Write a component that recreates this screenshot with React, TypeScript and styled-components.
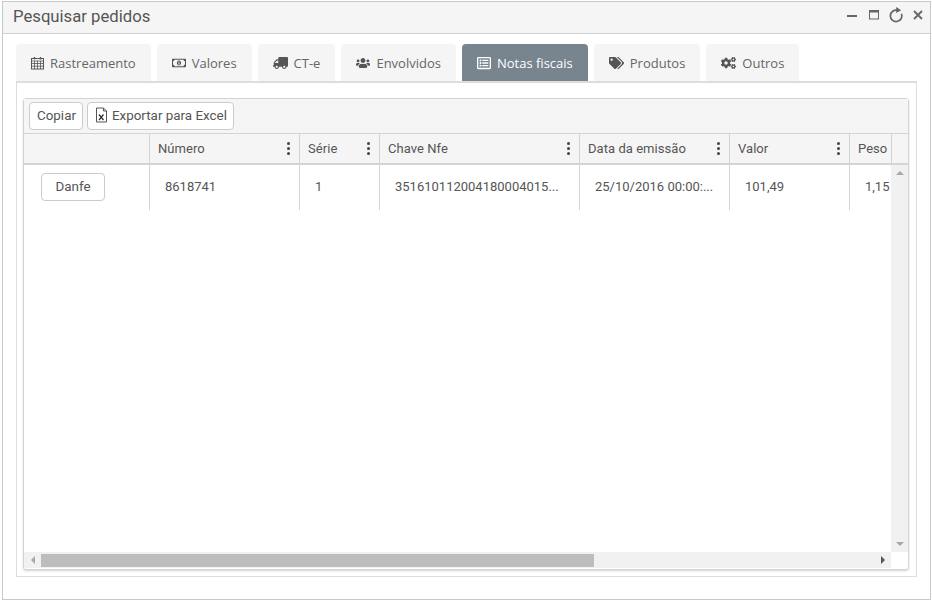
import styled, { createGlobalStyle } from 'styled-components'
import { FaCogs, FaRegListAlt, FaRegMoneyBillAlt, FaTags, FaTruck, FaUsers } from 'react-icons/fa'

const GlobalStyle = createGlobalStyle`
	html, body {
		margin: 0;
		background: #fff;
	}
	* {
		box-sizing: border-box;
	}
`

const Page = styled.div`
	width: 932px;
	height: 602px;
	padding: 1px 1px 2px 2px;
	font-family: Roboto, 'Liberation Sans', sans-serif;
`

const Window = styled.section`
	height: 100%;
	border: 1px solid #c8c8c8;
	background: #fff;
	display: flex;
	flex-direction: column;
`

const TitleBar = styled.header`
	height: 32px;
	flex: none;
	display: flex;
	align-items: center;
	justify-content: space-between;
	padding: 0 7px 3px 10px;
	background: #f5f5f5;
	border-bottom: 1px solid #d0d0d0;
`

const Title = styled.h1`
	margin: 0;
	font-weight: 400;
	font-size: 16.7px;
	color: #555;
`

const WindowActions = styled.div`
	display: flex;
	align-items: center;
	gap: 10px;
	margin-bottom: 2px;
`

const Content = styled.div`
	flex: 1;
	display: flex;
	flex-direction: column;
	padding: 10px 13px 22px 13px;
	min-height: 0;
`

const Tabs = styled.nav`
	display: flex;
	gap: 6px;
	height: 38px;
	flex: none;
`

const Tab = styled.div<{ $active?: boolean; $iconWidth: number }>`
	display: flex;
	align-items: center;
	gap: 6px;
	padding: 0 15px;
	border-radius: 4px 4px 0 0;
	font-family: 'Open Sans', sans-serif;
	font-size: 13px;
	color: ${(props) => (props.$active ? '#fff' : '#666')};
	background: ${(props) => (props.$active ? '#78848e' : '#f5f5f5')};
	svg {
		width: ${(props) => props.$iconWidth}px;
		height: 14px;
		color: ${(props) => (props.$active ? '#fff' : '#555')};
	}
`

const FlippedTruck = styled(FaTruck)`
	transform: scaleX(-1);
`

const TabPanel = styled.div`
	flex: 1;
	min-height: 0;
	margin-top: -1px;
	padding: 15px 7px 6px 6px;
	border: 1px solid #ddd;
	border-top: 2px solid #ddd;
`

const Grid = styled.div`
	height: 100%;
	display: flex;
	flex-direction: column;
	border: 1px solid #d4d4d4;
	border-radius: 3px;
	box-shadow: 0 1px 2px rgba(0, 0, 0, 0.18);
`

const Toolbar = styled.div`
	height: 35px;
	flex: none;
	display: flex;
	align-items: center;
	gap: 4px;
	padding: 0 5px;
	background: #f5f5f5;
	border-bottom: 1px solid #d4d4d4;
`

const Button = styled.button`
	height: 28px;
	display: inline-flex;
	align-items: center;
	justify-content: center;
	gap: 4px;
	padding: 0 6px 2px 7px;
	background: #fff;
	border: 1px solid #ccc;
	border-radius: 4px;
	font-family: inherit;
	font-size: 13.4px;
	color: #555;
`

const DanfeButton = styled(Button)`
	width: 64px;
	padding: 0 0 2px;
`

const HeaderRow = styled.div`
	height: 31px;
	flex: none;
	display: flex;
	background: #f5f5f5;
	border-bottom: 2px solid #d4d4d4;
`

const HeaderCell = styled.div<{ $width: number }>`
	width: ${(props) => props.$width}px;
	flex: none;
	display: flex;
	align-items: center;
	justify-content: space-between;
	padding: 0 3px 0 8px;
	font-size: 13px;
	letter-spacing: 0.05px;
	color: #555;
	border-right: 1px solid #d4d4d4;
`

const HeaderFiller = styled.div`
	flex: 1;
`

const Kebab = styled.span`
	width: 16px;
	display: flex;
	flex-direction: column;
	align-items: center;
	gap: 2px;
	i {
		width: 3px;
		height: 3px;
		border-radius: 50%;
		background: #444;
	}
`

const Body = styled.div`
	flex: 1;
	min-height: 0;
	display: flex;
`

const Viewport = styled.div`
	flex: 1;
	min-width: 0;
	background: #fff;
`

const Row = styled.div`
	height: 45px;
	display: flex;
`

const Cell = styled.div<{ $width: number; $border?: boolean }>`
	width: ${(props) => props.$width}px;
	flex: none;
	display: flex;
	align-items: center;
	padding: 0 0 3px 15px;
	font-size: 13px;
	color: #555;
	white-space: nowrap;
	overflow: hidden;
	border-right: ${(props) => (props.$border === false ? 'none' : '1px solid #d4d4d4')};
`

const ActionCell = styled(Cell)`
	padding: 0 0 1px 17px;
`

const VerticalBar = styled.div`
	width: 17px;
	flex: none;
	display: flex;
	flex-direction: column;
	justify-content: space-between;
	align-items: center;
	padding: 6px 0;
	background: #f1f1f1;
`

const HorizontalRow = styled.div`
	height: 17px;
	flex: none;
	display: flex;
	border-bottom: 1px solid transparent;
`

const HorizontalTrack = styled.div`
	width: 867px;
	flex: none;
	display: flex;
	align-items: center;
	background: #f1f1f1;
`

const ArrowSlot = styled.div`
	width: 17px;
	flex: none;
	display: flex;
	justify-content: center;
`

const EndSlot = styled(ArrowSlot)`
	margin-left: auto;
`

const Thumb = styled.div`
	width: 553px;
	height: 13px;
	background: #bdbdbd;
`

const Arrow = styled.span<{ $dir: 'up' | 'down' | 'left' | 'right'; $dark?: boolean }>`
	width: 0;
	height: 0;
	border: 4px solid transparent;
	${(props) => {
		const color = props.$dark ? '#555' : '#a8a8a8'
		if (props.$dir === 'up') return `border-top: 0; border-bottom: 4px solid ${color};`
		if (props.$dir === 'down') return `border-bottom: 0; border-top: 4px solid ${color};`
		if (props.$dir === 'left') return `border-left: 0; border-right: 4px solid ${color};`
		return `border-right: 0; border-left: 4px solid ${color};`
	}}
`

function CalendarIcon() {
	return (
		<svg viewBox="0 0 13 13" fill="none" stroke="currentColor" strokeWidth="1">
			<rect x="0.5" y="2" width="12" height="10.5" />
			<path d="M0.5 4.5h12 M0.5 7h12 M0.5 9.7h12 M3.5 4.5v8 M6.5 4.5v8 M9.5 4.5v8" strokeWidth="0.8" />
			<path d="M3.5 0.5v2.5 M9.5 0.5v2.5" strokeWidth="1.4" />
		</svg>
	)
}

const tabs = [
	{ label: 'Rastreamento', icon: <CalendarIcon />, iconWidth: 13 },
	{ label: 'Valores', icon: <FaRegMoneyBillAlt />, iconWidth: 14 },
	{ label: 'CT-e', icon: <FlippedTruck />, iconWidth: 15 },
	{ label: 'Envolvidos', icon: <FaUsers />, iconWidth: 14 },
	{ label: 'Notas fiscais', icon: <FaRegListAlt />, iconWidth: 14, active: true },
	{ label: 'Produtos', icon: <FaTags />, iconWidth: 15 },
	{ label: 'Outros', icon: <FaCogs />, iconWidth: 15 },
]

const columns = [
	{ label: 'Número', width: 150, value: '8618741' },
	{ label: 'Série', width: 80, value: '1' },
	{ label: 'Chave Nfe', width: 200, value: '351610112004180004015...' },
	{ label: 'Data da emissão', width: 150, value: '25/10/2016 00:00:...' },
	{ label: 'Valor', width: 120, value: '101,49' },
]

function ExcelIcon() {
	return (
		<svg width="13" height="16" viewBox="0 0 13 16" fill="none">
			<path d="M1.5 1h7l3 3v11h-10z M8.5 1v3h3" stroke="#555" strokeWidth="1" />
			<path d="M4 7.5l4.5 5.5 M8.5 7.5L4 13" stroke="#333" strokeWidth="1.3" />
		</svg>
	)
}

function MinimizeIcon() {
	return (
		<svg width="12" height="12" viewBox="0 0 12 12">
			<rect x="0" y="6" width="10" height="2" fill="#666" />
		</svg>
	)
}

function MaximizeIcon() {
	return (
		<svg width="10" height="10" viewBox="0 0 10 10" fill="none">
			<rect x="0.5" y="0.5" width="9" height="8.5" stroke="#666" />
			<rect x="0.5" y="0.5" width="9" height="2" fill="#666" />
		</svg>
	)
}

function RefreshIcon() {
	return (
		<svg width="14" height="17" viewBox="0 0 14 17" fill="none">
			<path d="M8.6 3.4A5.7 5.7 0 1 0 12.4 6.8" stroke="#666" strokeWidth="1.7" />
			<path d="M7.2 0l5 3.2-5 2.8z" fill="#666" />
		</svg>
	)
}

function CloseIcon() {
	return (
		<svg width="10" height="10" viewBox="0 0 10 10" fill="none">
			<path d="M1 1l8 8 M9 1L1 9" stroke="#666" strokeWidth="1.8" />
		</svg>
	)
}

export default function App() {
	return (
		<Page>
			<GlobalStyle />
			<Window>
				<TitleBar>
					<Title>Pesquisar pedidos</Title>
					<WindowActions>
						<MinimizeIcon />
						<MaximizeIcon />
						<RefreshIcon />
						<CloseIcon />
					</WindowActions>
				</TitleBar>
				<Content>
					<Tabs>
						{tabs.map((tab) => (
							<Tab key={tab.label} $active={tab.active} $iconWidth={tab.iconWidth}>
								{tab.icon}
								{tab.label}
							</Tab>
						))}
					</Tabs>
					<TabPanel>
						<Grid>
							<Toolbar>
								<Button>Copiar</Button>
								<Button>
									<ExcelIcon />
									Exportar para Excel
								</Button>
							</Toolbar>
							<HeaderRow>
								<HeaderCell $width={126} />
								{columns.map((col) => (
									<HeaderCell key={col.label} $width={col.width}>
										{col.label}
										<Kebab>
											<i />
											<i />
											<i />
										</Kebab>
									</HeaderCell>
								))}
								<HeaderCell $width={42}>Peso</HeaderCell>
								<HeaderFiller />
							</HeaderRow>
							<Body>
								<Viewport>
									<Row>
										<ActionCell $width={126}>
											<DanfeButton>Danfe</DanfeButton>
										</ActionCell>
										{columns.map((col) => (
											<Cell key={col.label} $width={col.width}>
												{col.value}
											</Cell>
										))}
										<Cell $width={42} $border={false}>
											1,15
										</Cell>
									</Row>
								</Viewport>
								<VerticalBar>
									<Arrow $dir="up" />
									<Arrow $dir="down" />
								</VerticalBar>
							</Body>
							<HorizontalRow>
								<HorizontalTrack>
									<ArrowSlot>
										<Arrow $dir="left" />
									</ArrowSlot>
									<Thumb />
									<EndSlot>
										<Arrow $dir="right" $dark />
									</EndSlot>
								</HorizontalTrack>
							</HorizontalRow>
						</Grid>
					</TabPanel>
				</Content>
			</Window>
		</Page>
	)
}
